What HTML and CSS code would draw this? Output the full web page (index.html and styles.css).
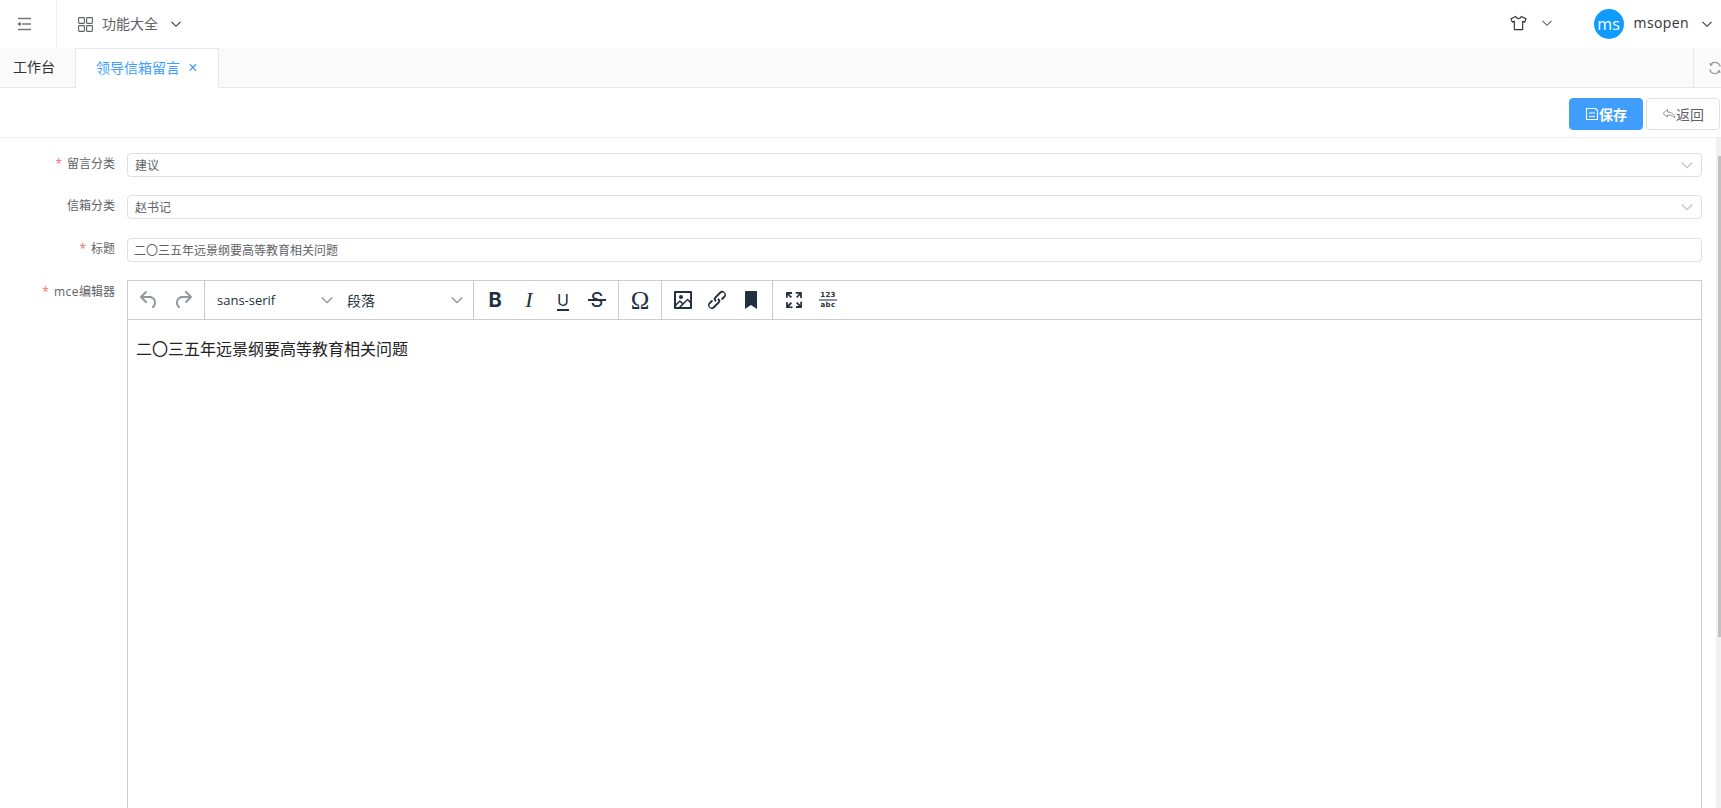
FILE: index.html
```html
<!DOCTYPE html>
<html lang="zh-CN">
<head>
<meta charset="utf-8">
<title>领导信箱留言</title>
<link rel="stylesheet" href="styles.css">
</head>
<body>
<svg class="defs" aria-hidden="true">
  <symbol id="chev" viewBox="0 0 12 12"><path d="M1.500 3.800 6 8.300l4.500-4.500" fill="none" stroke="currentColor" stroke-width="1.100"/></symbol>
</svg>
<div class="app">
  <header class="topbar">
    <div class="burger-cell">
      <svg class="burger" viewBox="0 0 14 14"><path d="M1 1.500h13M5 7h9M1 12.500h13" fill="none" stroke="#777" stroke-width="1.300"/><path d="M0.500 7 3.500 5v4z" fill="#444"/></svg>
    </div>
    <div class="menu-trigger">
      <svg class="grid-icon" viewBox="0 0 15 15"><g fill="none" stroke="#606266" stroke-width="1.100"><rect x=".6" y=".6" width="5.800" height="5.800" rx=".8"/><rect x="8.600" y=".6" width="5.800" height="5.800" rx=".8"/><rect x=".6" y="8.600" width="5.800" height="5.800" rx=".8"/><rect x="8.600" y="8.600" width="5.800" height="5.800" rx=".8"/></g></svg>
      <span class="menu-label">功能大全</span>
      <svg class="chev menu-chev"><use href="#chev"/></svg>
    </div>
    <div class="top-right">
      <svg class="shirt" viewBox="0 0 18 16"><path d="M6 1 1 3.400l1.400 3.700 2.200-.8V15h8.800V6.300l2.200.8L17 3.400 12 1c-.5 1.500-1.600 2.300-3 2.300S6.500 2.500 6 1z" fill="none" stroke="#303133" stroke-width="1.200" stroke-linejoin="round"/></svg>
      <svg class="chev shirt-chev"><use href="#chev"/></svg>
      <div class="avatar">ms</div>
      <span class="username">msopen</span>
      <svg class="chev user-chev"><use href="#chev"/></svg>
    </div>
  </header>

  <nav class="tabbar">
    <div class="tab">工作台</div>
    <div class="tab tab-active">领导信箱留言<span class="tab-close">×</span></div>
    <div class="tab-fill"></div>
    <div class="refresh-cell">
      <svg class="refresh" viewBox="0 0 14 14"><g fill="none" stroke="#909399" stroke-width="1.100"><path d="M12.300 5.500A5.500 5.500 0 0 0 2.600 3.600"/><path d="M1.700 8.500a5.500 5.500 0 0 0 9.700 1.900"/></g><path d="M1.600 1.800 2 5l3-1zM12.400 12.200 12 9l-3 1z" fill="#909399"/></svg>
    </div>
  </nav>

  <div class="actions">
    <button class="btn btn-primary" type="button">
      <svg class="btn-icon" viewBox="0 0 14 14"><path d="M1.500 1.500h9l2 2v9h-11zM4 6h6M4 9.500h6" fill="none" stroke="currentColor" stroke-width="1.100"/></svg>保存
    </button>
    <button class="btn" type="button">
      <svg class="btn-icon" viewBox="0 0 14 12"><path d="M5.500 1.500 1 5.500l4.500 3.500V7c3 0 5.500.5 7.500 3-.5-3.500-3-6-7.500-6z" fill="none" stroke="#909399" stroke-width="1" stroke-linejoin="round"/></svg>返回
    </button>
  </div>

  <div class="body-row">
    <main class="scroller">
      <form class="form">
        <div class="row">
          <label class="label"><span class="star">*</span>留言分类</label>
          <div class="field select"><span>建议</span><svg class="chev field-chev"><use href="#chev"/></svg></div>
        </div>
        <div class="row">
          <label class="label">信箱分类</label>
          <div class="field select"><span>赵书记</span><svg class="chev field-chev"><use href="#chev"/></svg></div>
        </div>
        <div class="row">
          <label class="label"><span class="star">*</span>标题</label>
          <div class="field field-text"><span>二〇三五年远景纲要高等教育相关问题</span></div>
        </div>
        <div class="row">
          <label class="label label-editor"><span class="star">*</span><span class="latin">mce</span>编辑器</label>
          <div class="editor">
            <div class="toolbar">
              <div class="tgroup">
                <span class="tbtn off"><svg viewBox="0 0 24 24"><path d="M6.400 8H12c3.700 0 6.200 2 6.800 5.100.6 2.700-.4 5.600-2.300 6.800a1 1 0 0 1-1-1.800c1.100-.7 1.800-2.700 1.400-4.600-.5-2.100-2.100-3.500-4.900-3.500H6.400l3.300 3.300a1 1 0 1 1-1.400 1.400l-5-5a1 1 0 0 1 0-1.400l5-5a1 1 0 0 1 1.400 1.400L6.400 8z"/></svg></span>
                <span class="tbtn off"><svg viewBox="0 0 24 24"><path d="M17.600 10H12c-2.800 0-4.400 1.400-4.900 3.500-.4 2 .3 4 1.400 4.600a1 1 0 1 1-1 1.800c-2-1.200-2.900-4.100-2.300-6.800.6-3 3-5.100 6.800-5.100h5.600l-3.300-3.300a1 1 0 1 1 1.400-1.400l5 5a1 1 0 0 1 0 1.400l-5 5a1 1 0 0 1-1.400-1.400l3.300-3.300z"/></svg></span>
              </div>
              <div class="tgroup">
                <div class="tselect"><span class="tfont">sans-serif</span><svg class="chev tchev"><use href="#chev"/></svg></div>
                <div class="tselect"><span>段落</span><svg class="chev tchev"><use href="#chev"/></svg></div>
              </div>
              <div class="tgroup">
                <span class="tbtn glyph g-bold">B</span>
                <span class="tbtn glyph g-italic">I</span>
                <span class="tbtn glyph g-under">U</span>
                <span class="tbtn glyph g-strike">S</span>
              </div>
              <div class="tgroup">
                <span class="tbtn glyph g-omega">Ω</span>
              </div>
              <div class="tgroup">
                <span class="tbtn"><svg viewBox="0 0 24 24"><path d="M5 15.700l3.300-3.200c.3-.3.7-.3 1 0L12 15l4.100-4c.3-.4.800-.4 1 0l2 1.900V5H5v10.700zM5 18v1h3l2.800-2.900-2-2L5 17.900zm14-3l-2.500-2.400-6.400 6.500H19v-4.100zM4 3h16c.6 0 1 .4 1 1v16c0 .6-.4 1-1 1H4a1 1 0 0 1-1-1V4c0-.6.4-1 1-1zm6 8a2 2 0 1 0 0-4 2 2 0 0 0 0 4z"/></svg></span>
                <span class="tbtn"><svg viewBox="0 0 24 24"><path d="M6.200 12.300a1 1 0 0 1 1.400 1.400l-2.100 2.100a2 2 0 1 0 2.700 2.700l4.800-4.800a1 1 0 0 0 0-1.400 1 1 0 1 1 1.400-1.300 2.900 2.900 0 0 1 0 4L9.600 20a3.900 3.900 0 0 1-5.500-5.500l2.100-2.200zm11.600-.6a1 1 0 0 1-1.400-1.400l2.100-2a2 2 0 1 0-2.700-2.700L11 10.300a1 1 0 0 0 0 1.400A1 1 0 1 1 9.600 13a2.900 2.900 0 0 1 0-4L14.400 4a3.900 3.900 0 0 1 5.500 5.500l-2.100 2.200z"/></svg></span>
                <span class="tbtn"><svg viewBox="0 0 24 24"><path d="M6 4v17l6-4 6 4V4c0-.6-.4-1-1-1H7a1 1 0 0 0-1 1z"/></svg></span>
              </div>
              <div class="tgroup tgroup-last">
                <span class="tbtn"><svg viewBox="0 0 24 24"><path d="M15.300 10l-1.200-1.300 2.900-3h-2.300a.9.900 0 1 1 0-1.700H19c.5 0 .9.4.9.9v4.400a.9.900 0 1 1-1.800 0V7l-2.800 3zm0 4l3 3v-2.300a.9.900 0 1 1 1.700 0V19c0 .5-.4.900-.9.900h-4.400a.9.900 0 1 1 0-1.800H17l-3-2.900 1.300-1.200zM10 15.400l-2.900 3h2.300a.9.900 0 1 1 0 1.700H5a.9.900 0 0 1-.9-.9v-4.400a.9.900 0 1 1 1.800 0V17l2.900-3 1.200 1.400zM8.700 10L5.700 7v2.300a.9.900 0 0 1-1.700 0V5c0-.5.4-.9.900-.9h4.400a.9.900 0 0 1 0 1.800H7l3 2.900-1.300 1.200z"/></svg></span>
                <span class="tbtn wordcount"><span class="wc-top">123</span><span class="wc-bottom">abc</span></span>
              </div>
            </div>
            <div class="editor-body">二〇三五年远景纲要高等教育相关问题</div>
          </div>
        </div>
      </form>
    </main>
    <div class="scrolltrack"><div class="scrollthumb"></div></div>
  </div>
</div>
</body>
</html>
```
FILE: styles.css
```css
* { box-sizing: border-box; }
html, body { margin: 0; height: 100%; overflow: hidden; background: #fff; }
body { font-family: "Open Sans", "Noto Sans CJK SC", sans-serif; color: #303133; font-size: 14px; }
.defs { display: none; }
.app { display: flex; flex-direction: column; height: 100vh; }

.chev { width: 12px; height: 12px; flex: none; color: #303133; }

.topbar { display: flex; align-items: center; height: 48px; flex: none; }
.burger-cell { width: 57px; height: 48px; display: flex; align-items: center; justify-content: center; border-right: 1px solid #eef0f4; padding-right: 8px; }
.burger { width: 14px; height: 14px; }
.menu-trigger { display: flex; align-items: center; margin-left: 21px; }
.grid-icon { width: 15px; height: 15px; }
.menu-label { margin-left: 9px; color: #606266; line-height: 48px; }
.menu-chev { margin-left: 12px; }
.top-right { display: flex; align-items: center; margin-left: auto; }
.shirt { width: 17px; height: 16px; margin-top: -2px; }
.shirt-chev { margin-left: 14px; margin-top: -3px; color: #606266; }
.avatar { width: 30px; height: 30px; border-radius: 50%; background: #0f9bff; color: #fff; font-size: 16px; line-height: 30px; text-align: center; margin-left: 41px; }
.username { margin-left: 10px; color: #303133; letter-spacing: .4px; margin-top: -3px; }
.user-chev { margin-left: 12px; margin-right: 8px; }

.tabbar { display: flex; height: 40px; flex: none; background: #fafafa; border-bottom: 1px solid #e4e7ed; }
.tab { height: 40px; padding: 0 13px; line-height: 38px; color: #303133; width: 76px; }
.tab-active { width: 144px; margin-left: -1px; padding: 0 0 0 20px; background: #fff; color: #409eff; border: 1px solid #e4e7ed; border-bottom: 0; }
.tab-close { margin-left: 8px; font-size: 16px; font-weight: 300; line-height: 1; font-family: "Liberation Sans", sans-serif; }
.tab-fill { flex: 1; }
.refresh-cell { width: 28px; height: 39px; border-left: 1px solid #e4e7ed; padding: 13px 0 0 14px; overflow: hidden; }
.refresh { width: 14px; height: 14px; display: block; }

.actions { display: flex; justify-content: flex-end; align-items: center; gap: 3px; height: 50px; flex: none; padding: 3px 1px 0 0; border-bottom: 1px solid #ebeef5; }
.btn { display: flex; align-items: center; justify-content: center; width: 74px; height: 32px; padding: 0 0 1px; border: 1px solid #dcdfe6; border-radius: 4px; background: #fff; color: #606266; font: inherit; }
.btn-primary { background: #409eff; border-color: #409eff; color: #fff; font-weight: 600; }
.btn-icon { width: 14px; height: 14px; flex: none; }

.body-row { flex: 1; min-height: 0; display: flex; }
.scroller { flex: 1; min-width: 0; overflow: hidden; }
.scrolltrack { width: 5px; flex: none; background: #f1f1f1; padding: 18px 0 0 2px; }
.scrollthumb { height: 481px; background: #c1c1c1; }

.form { display: flex; flex-direction: column; gap: 18.4px; padding: 15px 14px 0 0; }
.row { display: flex; align-items: flex-start; }
.label { width: 127px; flex: none; padding-right: 12px; font-size: 12px; line-height: 22px; color: #606266; text-align: right; }
.label-editor { padding-top: 1px; }
.latin { letter-spacing: .5px; }
.star { color: #f56c6c; margin-right: 5px; }
.field { flex: 1; display: flex; align-items: center; justify-content: space-between; height: 24px; padding: 0 7px; border: 1px solid #dcdfe6; border-radius: 4px; font-size: 12px; color: #606266; }
.field-text { padding-left: 6px; }
.select { padding-left: 7px; padding-right: 7px; }
.field-chev { width: 14px; height: 14px; color: #c0c4cc; }

.editor { flex: 1; height: 720px; border: 1px solid #ccc; display: flex; flex-direction: column; }
.toolbar { display: flex; height: 39px; flex: none; border-bottom: 1px solid #ccc; }
.tgroup { display: flex; align-items: center; padding: 0 4px; border-right: 1px solid #ccc; }
.tgroup-last { border-right: 0; }
.tbtn { width: 34px; height: 34px; display: flex; align-items: center; justify-content: center; color: #222f3e; }
.tbtn svg { width: 24px; height: 24px; fill: currentColor; }
.off { color: rgba(34, 47, 62, .5); }
.tselect { width: 130px; height: 34px; display: flex; align-items: center; justify-content: space-between; padding: 0 5px 0 8px; font-size: 14px; color: #222f3e; }
.tfont { font-size: 13px; }
.tchev { width: 14px; height: 14px; color: #8a9099; }

.glyph { line-height: 1; }
.g-bold { font-family: Inter, sans-serif; font-weight: 700; font-size: 20px; }
.g-italic { font-family: "Liberation Serif", serif; font-style: italic; font-size: 22px; }
.g-under { font-family: Inter, sans-serif; font-size: 16px; font-weight: 400; text-decoration: underline; text-decoration-thickness: 2px; text-underline-offset: 3px; }
.g-strike { position: relative; font-family: Inter, sans-serif; font-size: 20px; }
.g-strike::after { content: ""; position: absolute; left: 8px; right: 8px; top: 16px; height: 2px; background: currentColor; }
.g-omega { font-family: "Liberation Serif", serif; font-size: 25px; }

.wordcount { flex-direction: column; font-family: "DejaVu Sans", sans-serif; font-weight: 700; font-size: 7px; line-height: 8px; letter-spacing: .3px; }
.wc-top { border-bottom: 2px solid #8a9099; padding: 0 1px; line-height: 8px; }

.editor-body { flex: 1; padding: 17px 8px; font-size: 16px; line-height: 24px; color: #222; }
```
